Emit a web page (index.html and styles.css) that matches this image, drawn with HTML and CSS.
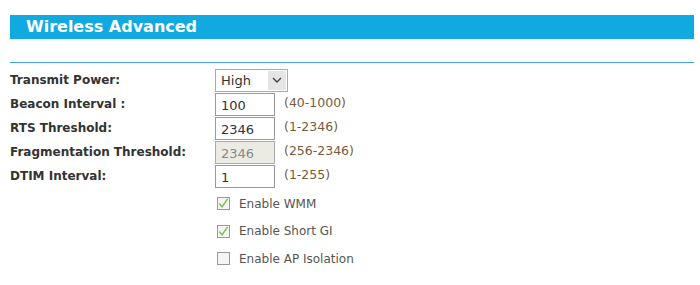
FILE: index.html
```html
<!DOCTYPE html>
<html lang="en">
  <head>
    <meta charset="UTF-8" />
    <title>Wireless Advanced</title>
    <link rel="stylesheet" href="styles.css">
  </head>
  <body>
    <div class="page">
      <div class="title-bar">Wireless Advanced</div>
      <div class="divider"></div>

      <div class="form">
        <div class="row">
          <label class="label">Transmit Power:</label>
          <div class="select">
            <span class="select-value">High</span>
            <span class="select-arrow">
              <svg width="10" height="6" viewBox="0 0 10 6"><path d="M1 1 L5 5 L9 1" fill="none" stroke="#444" stroke-width="1.4"/></svg>
            </span>
          </div>
        </div>
        <div class="row">
          <label class="label">Beacon Interval :</label>
          <input class="field" type="text" value="100">
          <span class="hint">(40-1000)</span>
        </div>
        <div class="row">
          <label class="label">RTS Threshold:</label>
          <input class="field" type="text" value="2346">
          <span class="hint">(1-2346)</span>
        </div>
        <div class="row">
          <label class="label">Fragmentation Threshold:</label>
          <input class="field" type="text" value="2346" disabled>
          <span class="hint">(256-2346)</span>
        </div>
        <div class="row">
          <label class="label">DTIM Interval:</label>
          <input class="field" type="text" value="1">
          <span class="hint">(1-255)</span>
        </div>

        <div class="checks">
          <div class="check">
            <span class="box">
              <svg width="13" height="13" viewBox="0 0 13 13"><path d="M2.5 6.5 L5.5 10 L11.5 1.5" fill="none" stroke="#7cc24a" stroke-width="1.6"/></svg>
            </span>
            <span class="check-text">Enable WMM</span>
          </div>
          <div class="check">
            <span class="box">
              <svg width="13" height="13" viewBox="0 0 13 13"><path d="M2.5 6.5 L5.5 10 L11.5 1.5" fill="none" stroke="#7cc24a" stroke-width="1.6"/></svg>
            </span>
            <span class="check-text">Enable Short GI</span>
          </div>
          <div class="check">
            <span class="box"></span>
            <span class="check-text">Enable AP Isolation</span>
          </div>
        </div>
      </div>
    </div>
  </body>
</html>
```

FILE: styles.css
```css
body {
  margin: 0;
  background: #fff;
  font-family: "DejaVu Sans", Verdana, sans-serif;
  font-size: 12px;
  color: #333;
}
.page {
  padding: 15px 6px 0 10px;
}
.title-bar {
  height: 24px;
  line-height: 24px;
  background-color: #11aae0;
  color: #fff;
  font-weight: bold;
  font-size: 16px;
  padding-left: 16px;
}
.divider {
  margin-top: 23px;
  border-top: 1px solid #44a5d6;
}
.form {
  padding-top: 5px;
}
.row {
  display: flex;
  align-items: center;
  height: 24px;
}
.label {
  width: 205px;
  font-weight: bold;
  color: #333;
}
.select {
  display: flex;
  align-items: center;
  width: 70px;
  height: 21px;
  border: 1px solid #aaa;
  padding: 0 1px 0 0;
}
.select-value {
  flex: 1;
  padding-left: 5px;
  font-size: 13px;
  color: #333;
}
.select-arrow {
  display: flex;
  align-items: center;
  justify-content: center;
  width: 18px;
  height: 19px;
  background-color: #e5e5e5;
}
.field {
  box-sizing: border-box;
  width: 60px;
  height: 23px;
  border: 1px solid #999;
  padding: 3px 0 0 5px;
  font-family: inherit;
  font-size: 13px;
  color: #333;
  margin: 0;
}
.field:disabled {
  background-color: #ebebe4;
  border-color: #aaa;
  color: #888;
}
.hint {
  margin-left: 9px;
  margin-top: -4px;
  font-size: 12.5px;
  color: #7a5a3c;
}
.checks {
  padding: 2px 0 0 207px;
}
.check {
  display: flex;
  align-items: center;
  height: 27.5px;
}
.box {
  box-sizing: border-box;
  width: 13px;
  height: 13px;
  border: 1px solid #999;
  background: #f5f5f5;
  margin-right: 9px;
  display: flex;
}
.box svg {
  margin: -1px 0 0 -1px;
}
.check-text {
  color: #555;
}
```
